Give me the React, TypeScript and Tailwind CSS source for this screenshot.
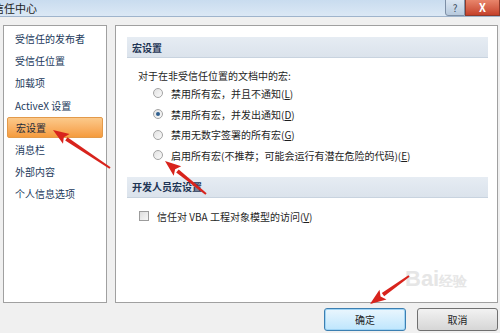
import React from 'react';

const font = { fontFamily: '"Noto Sans CJK SC", "Liberation Sans", sans-serif' };

const navItems = ['受信任的发布者', '受信任位置', '加载项', 'ActiveX 设置', '宏设置', '消息栏', '外部内容', '个人信息选项'];

const macroOptions = [
  { label: '禁用所有宏，并且不通知', key: 'L' },
  { label: '禁用所有宏，并发出通知', key: 'D' },
  { label: '禁用无数字签署的所有宏', key: 'G' },
  { label: '启用所有宏(不推荐；可能会运行有潜在危险的代码)', key: 'E' },
];

function Radio({ checked }: { checked: boolean }) {
  return (
    <span className="w-[10px] h-[10px] rounded-full border border-[#a4a4a4] bg-gradient-to-br from-[#e2e2e2] to-[#fafafa] flex items-center justify-center shrink-0">
      {checked && <span className="w-[4px] h-[4px] rounded-full bg-[#2f5f8f]" />}
    </span>
  );
}

function Arrow({ x1, y1, x2, y2 }: { x1: number; y1: number; x2: number; y2: number }) {
  const dx = x2 - x1;
  const dy = y2 - y1;
  const len = Math.sqrt(dx * dx + dy * dy);
  const ux = dx / len;
  const uy = dy / len;
  const px = -uy;
  const py = ux;
  const hl = 16;
  const hw = 6;
  const bx = x2 - ux * hl;
  const by = y2 - uy * hl;
  const shaft = `${x1 + px * 1},${y1 + py * 1} ${bx + px * 2},${by + py * 2} ${bx - px * 2},${by - py * 2} ${x1 - px * 1},${y1 - py * 1}`;
  const head = `${x2},${y2} ${bx + px * hw},${by + py * hw} ${bx + ux * 3},${by + uy * 3} ${bx - px * hw},${by - py * hw}`;
  return (
    <g fill="#d8231c">
      <polygon points={shaft} />
      <polygon points={head} />
    </g>
  );
}

export default function App() {
  return (
    <div className="relative w-[500px] h-[333px] overflow-hidden bg-[#f0f0f0] text-[10px] text-[#1e1e1e]" style={font}>
      {/* Title bar */}
      <div className="h-[17px] flex items-stretch bg-gradient-to-b from-[#c9dcef] to-[#dbe8f5] border-b border-[#9fb4cc]">
        <div className="flex-1 flex items-center -ml-[7px] text-[11px] text-[#1c1c1c]">信任中心</div>
        <div className="w-[20px] -mt-[1px] rounded-bl-[3px] border border-[#7d8fa6] bg-gradient-to-b from-[#dbe6f2] to-[#b7c9dd] flex items-center justify-center text-[10px] text-[#3d4c5e]">?</div>
        <div className="w-[35px] -mt-[1px] border border-[#8d3a2b] bg-gradient-to-b from-[#e8856b] to-[#c4402a] flex items-center justify-center text-white text-[11px] font-bold">X</div>
      </div>

      {/* Body */}
      <div className="flex gap-[8px] pl-[3px] pr-[2px] pt-[8px] h-[286px]">
        {/* Left nav */}
        <div className="w-[104px] bg-white border border-[#a0a0a0] pt-[2px] px-[3px] flex flex-col">
          {navItems.map((item) => {
            const active = item === '宏设置';
            return (
              <div
                key={item}
                className={`h-[21px] mb-[1.2px] flex items-center pl-[8px] text-[10px] ${
                  active
                    ? 'rounded-[2px] border border-[#e39a4a] bg-gradient-to-b from-[#fbc98a] to-[#f59b3c] text-[#1d2a3a]'
                    : 'text-[#233a5c]'
                }`}
              >
                {item}
              </div>
            );
          })}
        </div>

        {/* Right panel */}
        <div className="flex-1 bg-white border border-[#a0a0a0] pt-[11px] pl-[11px] pr-[9px]">
          <div className="h-[21px] bg-gradient-to-b from-[#e6ecf3] to-[#dbe3ec] border-b border-[#c8d3df] flex items-center pl-[5px] font-bold text-[#1e3555]">
            宏设置
          </div>
          <div className="pl-[11px] pt-[11px] h-[25px] leading-[13px]">对于在非受信任位置的文档中的宏:</div>
          <div className="pl-[26px] flex flex-col">
            {macroOptions.map((o, i) => (
              <div key={o.key} className="h-[20.7px] flex items-center gap-[8px]">
                <Radio checked={i === 1} />
                <span>
                  {o.label}(<span className="underline">{o.key}</span>)
                </span>
              </div>
            ))}
          </div>
          <div className="mt-[11px] h-[21px] bg-gradient-to-b from-[#e6ecf3] to-[#dbe3ec] border-b border-[#c8d3df] flex items-center pl-[5px] font-bold text-[#1e3555]">
            开发人员宏设置
          </div>
          <div className="pl-[12px] pt-[11px] flex items-center gap-[8px]">
            <span className="w-[10px] h-[10px] border border-[#9c9c9c] bg-gradient-to-br from-[#dedede] to-[#f7f7f7] shrink-0" />
            <span>
              信任对 VBA 工程对象模型的访问(<span className="underline">V</span>)
            </span>
          </div>
        </div>
      </div>

      {/* Buttons */}
      <div className="flex justify-end gap-[11px] pr-[2px] pt-[5px]">
        <button className="w-[82px] h-[23px] rounded-[3px] border border-[#3c7fb1] bg-gradient-to-b from-[#eaf6fd] to-[#bee6fd] shadow-[inset_0_0_0_1px_#9fd4f5] text-[10px] text-[#1e1e1e]">
          确定
        </button>
        <button className="w-[81px] h-[23px] rounded-[3px] border border-[#707070] bg-gradient-to-b from-[#f2f2f2] to-[#d6d6d6] text-[10px] text-[#1e1e1e]">
          取消
        </button>
      </div>

      {/* Baidu watermark */}
      <div className="absolute left-[405px] top-[262px] text-[22px] font-bold text-[#d6d6d6] opacity-60 select-none" style={{ fontFamily: '"Liberation Sans", sans-serif' }}>
        Bai<span className="text-[14px]">经验</span>
      </div>

      {/* Annotation arrows */}
      <svg className="absolute inset-0 pointer-events-none" width="500" height="333" viewBox="0 0 500 333">
        <Arrow x1={110} y1={168} x2={53} y2={130} />
        <Arrow x1={206} y1={194} x2={165} y2={161} />
        <Arrow x1={409} y1={276} x2={370} y2={304} />
      </svg>
    </div>
  );
}
